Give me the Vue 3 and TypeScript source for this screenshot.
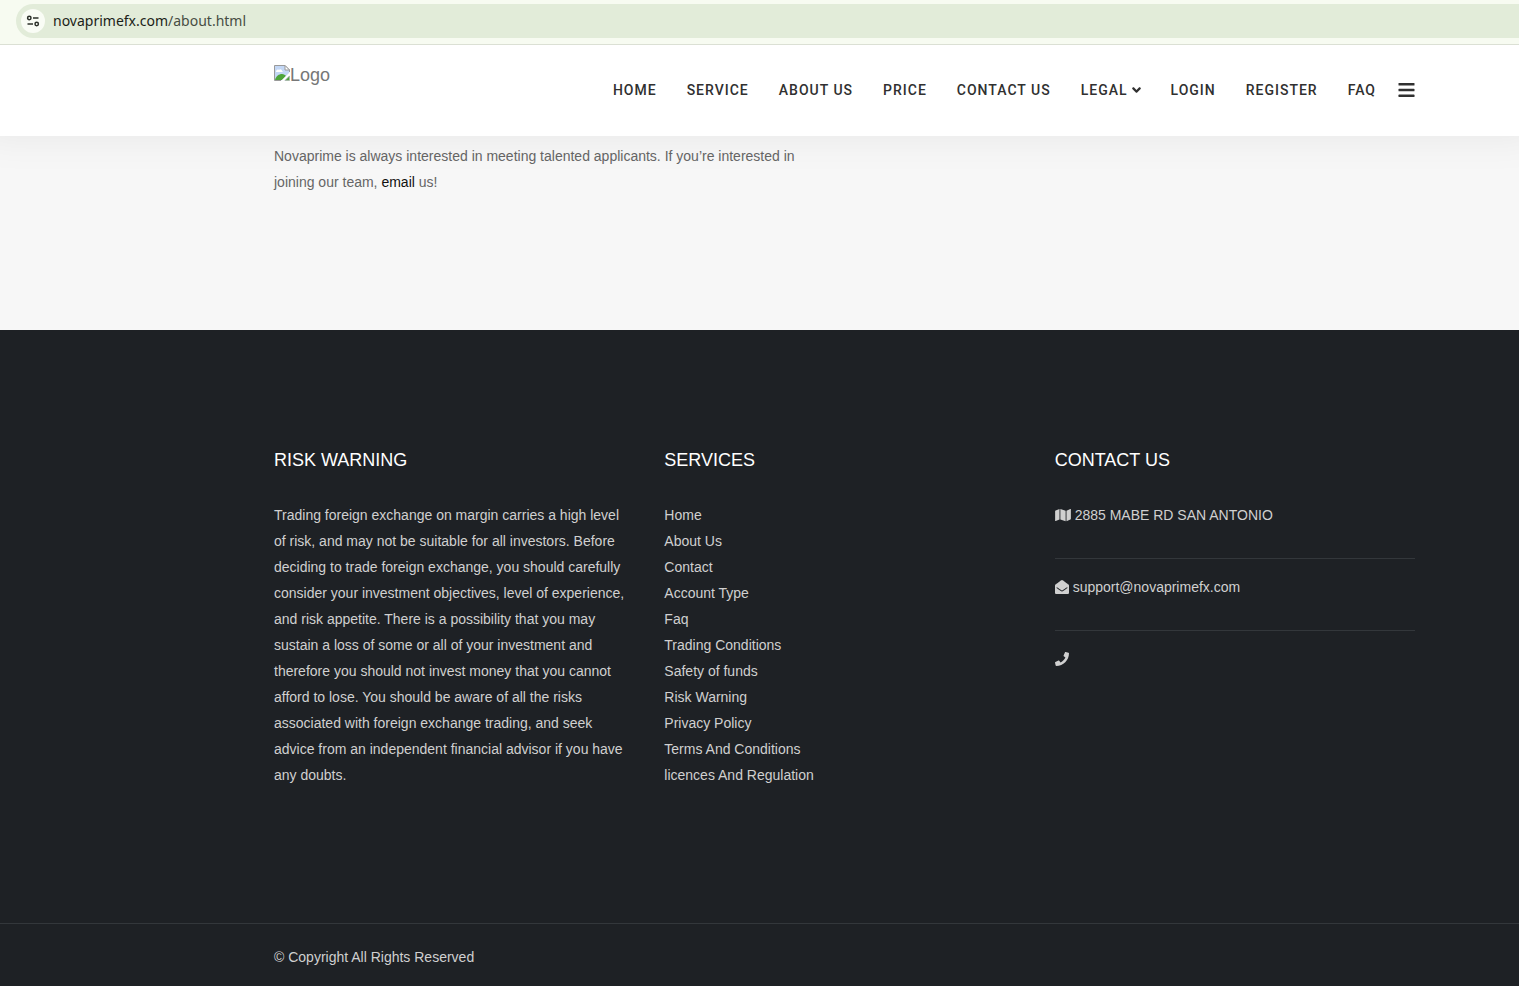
<script setup lang="ts">
interface NavItem {
  label: string
  menu?: boolean
}

const navItems: NavItem[] = [
  { label: 'Home' },
  { label: 'Service' },
  { label: 'About Us' },
  { label: 'Price' },
  { label: 'Contact Us' },
  { label: 'Legal', menu: true },
  { label: 'Login' },
  { label: 'Register' },
  { label: 'FAQ' },
]

const services: string[] = [
  'Home',
  'About Us',
  'Contact',
  'Account Type',
  'Faq',
  'Trading Conditions',
  'Safety of funds',
  'Risk Warning',
  'Privacy Policy',
  'Terms And Conditions',
  'licences And Regulation',
]
</script>

<template>
  <div class="page">
    <div class="browser-bar">
      <div class="address">
        <button class="site-info" type="button" aria-label="View site information">
          <svg width="14" height="14" viewBox="0 0 14 14" fill="none" stroke="#2b2f29" stroke-width="1.5">
            <circle cx="3.3" cy="4" r="1.7" />
            <path d="M7 4h5.5M1.5 10h5.5" />
            <circle cx="10.7" cy="10" r="1.7" />
          </svg>
        </button>
        <span class="url"><span class="domain">novaprimefx.com</span>/about.html</span>
      </div>
    </div>

    <header class="site-header">
      <a class="logo" href="#">
        <svg width="16" height="16" viewBox="0 0 16 16">
          <path d="M.5 15.500V.5H11l4.500 4.500v10.500z" fill="#c3d7f5" />
          <path d="M2 7c0-2 1.500-3 3-2 1-1.500 3-.5 3 1 1 0 1 1 .5 1z" fill="#fff" />
          <path d="M1 15c1-4 4-6 7-6 2 0 3 1 4 2l-4 4z" fill="#4ea53b" />
          <path d="M.5 15.500V.5H11l4.500 4.500v2M.5 15.500H7" fill="none" stroke="#9a9a9a" />
          <path d="M11 .5V5h4.500z" fill="#fff" stroke="#9a9a9a" />
          <path d="M7 16l9-9v3l-6 6z" fill="#fff" />
          <path d="M11 15.500h4.500V11z" fill="#4ea53b" stroke="#b0b0b0" stroke-width=".6" />
        </svg>
        <span>Logo</span>
      </a>
      <nav class="nav" aria-label="Main">
        <a v-for="item in navItems" :key="item.label" href="#" class="nav-link">
          {{ item.label }}
          <svg v-if="item.menu" class="chevron" width="9" height="14" viewBox="0 0 320 512" fill="currentColor">
            <path d="M143 352.300L7 216.300c-9.400-9.400-9.400-24.600 0-33.900l22.600-22.600c9.400-9.400 24.600-9.400 33.900 0l96.400 96.400 96.400-96.400c9.400-9.400 24.600-9.400 33.900 0l22.600 22.600c9.400 9.400 9.400 24.600 0 33.900l-136 136c-9.200 9.400-24.400 9.400-33.800 0z" />
          </svg>
        </a>
        <button class="menu-button" type="button" aria-label="Open menu">
          <svg width="17" height="18" viewBox="0 0 17 18" fill="#303030">
            <rect x="0.500" y="2" width="16" height="2.500" rx="0.600" />
            <rect x="0.500" y="7.800" width="16" height="2.500" rx="0.600" />
            <rect x="0.500" y="13.600" width="16" height="2.500" rx="0.600" />
          </svg>
        </button>
      </nav>
    </header>

    <main class="intro">
      <p>
        Novaprime is always interested in meeting talented applicants. If you’re interested in joining our team,
        <a href="#">email</a> us!
      </p>
    </main>

    <footer class="footer">
      <div class="columns">
        <section>
          <h2>RISK WARNING</h2>
          <p>
            Trading foreign exchange on margin carries a high level of risk, and may not be suitable for all
            investors. Before deciding to trade foreign exchange, you should carefully consider your investment
            objectives, level of experience, and risk appetite. There is a possibility that you may sustain a loss
            of some or all of your investment and therefore you should not invest money that you cannot afford to
            lose. You should be aware of all the risks associated with foreign exchange trading, and seek advice
            from an independent financial advisor if you have any doubts.
          </p>
        </section>
        <section>
          <h2>SERVICES</h2>
          <ul>
            <li v-for="service in services" :key="service"><a href="#">{{ service }}</a></li>
          </ul>
        </section>
        <section>
          <h2>CONTACT US</h2>
          <ul class="contact">
            <li>
              <svg width="16" height="14" viewBox="0 0 576 512" fill="currentColor">
                <path d="M0 117.660v346.320c0 11.320 11.430 19.060 21.940 14.860L160 416V32L20.120 87.950A32.006 32.006 0 0 0 0 117.660zM192 416l192 64V96L192 32v384zM554.060 33.160L416 96v384l139.880-55.950A31.996 31.996 0 0 0 576 394.340V48.020c0-11.320-11.430-19.060-21.940-14.860z" />
              </svg>
              <span>2885 MABE RD SAN ANTONIO</span>
            </li>
            <li>
              <svg width="14" height="14" viewBox="0 0 512 512" fill="currentColor">
                <path d="M512 464c0 26.510-21.490 48-48 48H48c-26.510 0-48-21.490-48-48V200.724a48 48 0 0 1 18.387-37.776c24.913-19.529 45.501-35.365 164.200-121.511C199.412 29.170 232.797-.347 256 .003c23.198-.354 56.596 29.172 73.413 41.433 118.687 86.137 139.303 101.995 164.200 121.512A48 48 0 0 1 512 200.724V464zm-65.666-196.605c-2.563-3.728-7.700-4.595-11.339-1.907-22.845 16.873-55.462 40.705-105.582 77.079-16.825 12.266-50.210 41.781-73.413 41.430-23.211.344-56.559-29.143-73.413-41.430-50.114-36.370-82.734-60.204-105.582-77.079-3.639-2.688-8.776-1.821-11.339 1.907l-9.072 13.196a7.998 7.998 0 0 0 1.839 10.967c22.887 16.899 55.454 40.690 105.303 76.868 20.274 14.781 56.524 47.813 92.264 47.573 35.724.242 71.961-32.771 92.263-47.573 49.850-36.179 82.418-59.970 105.303-76.868a7.998 7.998 0 0 0 1.839-10.967l-9.071-13.196z" />
              </svg>
              <a href="#">support@novaprimefx.com</a>
            </li>
            <li>
              <svg width="14" height="14" viewBox="0 0 512 512" fill="currentColor">
                <path d="M493.400 24.600l-104-24c-11.300-2.600-22.900 3.300-27.500 13.900l-48 112c-4.200 9.800-1.400 21.300 6.900 28l60.600 49.600c-36 76.700-98.900 140.500-177.200 177.200l-49.600-60.600c-6.800-8.300-18.200-11.100-28-6.900l-112 48C3.900 366.500-2 378.100.6 389.400l24 104C27.100 504.200 36.700 512 48 512c256.100 0 464-207.500 464-464 0-11.200-7.700-20.900-18.600-23.400z" />
              </svg>
            </li>
          </ul>
        </section>
      </div>
      <div class="copyright">© Copyright All Rights Reserved</div>
    </footer>
  </div>
</template>

<style>
body {
  margin: 0;
  background: #1e2125;
}
</style>

<style scoped>
.page {
  --gutter-left: 274px;
  --gutter-right: 104px;
  display: flex;
  flex-direction: column;
  min-height: 100vh;
  font-family: "Liberation Sans", Arial, sans-serif;
  font-size: 14px;
  line-height: 26px;
}

a {
  color: inherit;
  text-decoration: none;
}

button {
  display: flex;
  align-items: center;
  justify-content: center;
  padding: 0;
  border: 0;
  background: none;
}

p,
ul,
h2 {
  margin: 0;
  padding: 0;
}

ul {
  list-style: none;
}

.browser-bar {
  z-index: 2;
  padding: 4px 0 6px 16px;
  border-bottom: 1px solid #dbe0d4;
  background: #f7fbf1;
}

.address {
  display: flex;
  align-items: center;
  gap: 8px;
  height: 34px;
  padding-left: 5px;
  border-radius: 17px 0 0 17px;
  background: #e2ecd9;
}

.site-info {
  width: 24px;
  height: 24px;
  border-radius: 50%;
  background: #f9fcf5;
}

.url {
  color: #474d43;
  font-family: "Noto Sans", "Open Sans", sans-serif;
  font-size: 14px;
}

.domain {
  color: #1b1e18;
}

.site-header {
  display: flex;
  justify-content: space-between;
  z-index: 1;
  min-height: 91px;
  box-sizing: border-box;
  padding: 20px var(--gutter-right) 0 var(--gutter-left);
  background: #fff;
  box-shadow: 0 -20px 40px 20px rgba(0, 0, 0, 0.07);
}

.logo {
  display: flex;
  align-self: flex-start;
  align-items: flex-start;
  color: #777;
  font-size: 18px;
  line-height: 20px;
}

.nav {
  display: flex;
  align-items: center;
  align-self: flex-start;
  gap: 30px;
  padding-top: 12px;
}

.nav-link {
  display: flex;
  align-items: center;
  gap: 4px;
  color: #303030;
  font-family: Roboto, "Liberation Sans", sans-serif;
  font-size: 14px;
  font-weight: 500;
  letter-spacing: 1px;
  text-transform: uppercase;
}

.menu-button {
  margin-left: -8px;
}

.intro {
  padding: 7px var(--gutter-right) 135px var(--gutter-left);
  background: #f7f7f7;
  color: #666;
}

.intro p {
  max-width: 555px;
}

.intro a {
  color: #111;
}

.footer {
  display: flex;
  flex: 1;
  flex-direction: column;
  background: #1e2125;
  color: #d0d0d0;
}

.columns {
  display: grid;
  grid-template-columns: repeat(3, 1fr);
  gap: 30px;
  padding: 117px var(--gutter-right) 135px var(--gutter-left);
}

h2 {
  margin-bottom: 29px;
  color: #fff;
  font-size: 18px;
  font-weight: 400;
}

.contact li {
  display: flex;
  align-items: center;
  gap: 4px;
  min-height: 26px;
  padding-bottom: 30px;
}

.contact li + li {
  padding-top: 15px;
  border-top: 1px solid #33373b;
}

.copyright {
  padding: 20px var(--gutter-right) 16px var(--gutter-left);
  border-top: 1px solid #33373b;
}
</style>
